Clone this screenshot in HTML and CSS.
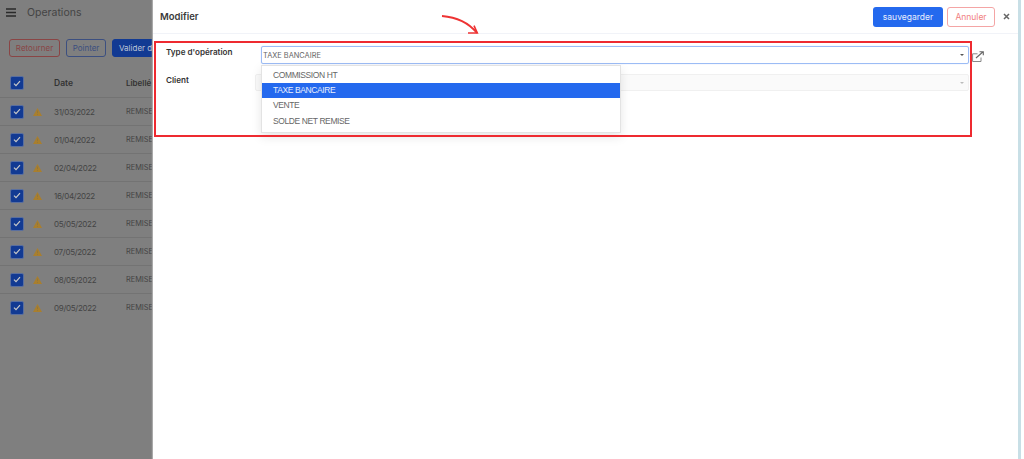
FILE: index.html
```html
<!DOCTYPE html>
<html lang="fr">
<head>
<meta charset="utf-8">
<title>Operations</title>
<link rel="stylesheet" href="styles.css">
</head>
<body>
<div class="screen">
  <section class="page">
    <header class="page-head">
      <svg class="burger" width="10" height="9" viewBox="0 0 10 9"><path d="M0 1h10M0 4.500h10M0 8h10" stroke="#2a2a2a" stroke-width="1.6"/></svg>
      <span class="page-title">Operations</span>
    </header>
    <div class="actions">
      <button class="btn btn-red">Retourner</button>
      <button class="btn btn-blue">Pointer</button>
      <button class="btn btn-solid">Valider d</button>
    </div>
    <div class="row row-head">
      <span class="check"><svg width="8" height="7" viewBox="0 0 8 7"><path d="M1 3.600l2 2 4-4.400" fill="none" stroke="#c9c9c9" stroke-width="1.2"/></svg></span>
      <span class="warn-slot"></span>
      <span class="col-date">Date</span>
      <span class="col-label">Libellé</span>
    </div>
    <div class="row"><span class="check"><svg width="8" height="7" viewBox="0 0 8 7"><path d="M1 3.600l2 2 4-4.400" fill="none" stroke="#c9c9c9" stroke-width="1.2"/></svg></span><span class="warn-slot"><svg width="9" height="8" viewBox="0 0 9 8"><path d="M4.500 0L9 8H0z" fill="#a97f2e"/><path d="M4.500 2.600v2.600M4.500 6v.9" stroke="#8f7540" stroke-width=".9"/></svg></span><span class="col-date">31/03/2022</span><span class="col-label">REMISE</span></div>
    <div class="row"><span class="check"><svg width="8" height="7" viewBox="0 0 8 7"><path d="M1 3.600l2 2 4-4.400" fill="none" stroke="#c9c9c9" stroke-width="1.2"/></svg></span><span class="warn-slot"><svg width="9" height="8" viewBox="0 0 9 8"><path d="M4.500 0L9 8H0z" fill="#a97f2e"/><path d="M4.500 2.600v2.600M4.500 6v.9" stroke="#8f7540" stroke-width=".9"/></svg></span><span class="col-date">01/04/2022</span><span class="col-label">REMISE</span></div>
    <div class="row"><span class="check"><svg width="8" height="7" viewBox="0 0 8 7"><path d="M1 3.600l2 2 4-4.400" fill="none" stroke="#c9c9c9" stroke-width="1.2"/></svg></span><span class="warn-slot"><svg width="9" height="8" viewBox="0 0 9 8"><path d="M4.500 0L9 8H0z" fill="#a97f2e"/><path d="M4.500 2.600v2.600M4.500 6v.9" stroke="#8f7540" stroke-width=".9"/></svg></span><span class="col-date">02/04/2022</span><span class="col-label">REMISE</span></div>
    <div class="row"><span class="check"><svg width="8" height="7" viewBox="0 0 8 7"><path d="M1 3.600l2 2 4-4.400" fill="none" stroke="#c9c9c9" stroke-width="1.2"/></svg></span><span class="warn-slot"><svg width="9" height="8" viewBox="0 0 9 8"><path d="M4.500 0L9 8H0z" fill="#a97f2e"/><path d="M4.500 2.600v2.600M4.500 6v.9" stroke="#8f7540" stroke-width=".9"/></svg></span><span class="col-date">16/04/2022</span><span class="col-label">REMISE</span></div>
    <div class="row"><span class="check"><svg width="8" height="7" viewBox="0 0 8 7"><path d="M1 3.600l2 2 4-4.400" fill="none" stroke="#c9c9c9" stroke-width="1.2"/></svg></span><span class="warn-slot"><svg width="9" height="8" viewBox="0 0 9 8"><path d="M4.500 0L9 8H0z" fill="#a97f2e"/><path d="M4.500 2.600v2.600M4.500 6v.9" stroke="#8f7540" stroke-width=".9"/></svg></span><span class="col-date">05/05/2022</span><span class="col-label">REMISE</span></div>
    <div class="row"><span class="check"><svg width="8" height="7" viewBox="0 0 8 7"><path d="M1 3.600l2 2 4-4.400" fill="none" stroke="#c9c9c9" stroke-width="1.2"/></svg></span><span class="warn-slot"><svg width="9" height="8" viewBox="0 0 9 8"><path d="M4.500 0L9 8H0z" fill="#a97f2e"/><path d="M4.500 2.600v2.600M4.500 6v.9" stroke="#8f7540" stroke-width=".9"/></svg></span><span class="col-date">07/05/2022</span><span class="col-label">REMISE</span></div>
    <div class="row"><span class="check"><svg width="8" height="7" viewBox="0 0 8 7"><path d="M1 3.600l2 2 4-4.400" fill="none" stroke="#c9c9c9" stroke-width="1.2"/></svg></span><span class="warn-slot"><svg width="9" height="8" viewBox="0 0 9 8"><path d="M4.500 0L9 8H0z" fill="#a97f2e"/><path d="M4.500 2.600v2.600M4.500 6v.9" stroke="#8f7540" stroke-width=".9"/></svg></span><span class="col-date">08/05/2022</span><span class="col-label">REMISE</span></div>
    <div class="row"><span class="check"><svg width="8" height="7" viewBox="0 0 8 7"><path d="M1 3.600l2 2 4-4.400" fill="none" stroke="#c9c9c9" stroke-width="1.2"/></svg></span><span class="warn-slot"><svg width="9" height="8" viewBox="0 0 9 8"><path d="M4.500 0L9 8H0z" fill="#a97f2e"/><path d="M4.500 2.600v2.600M4.500 6v.9" stroke="#8f7540" stroke-width=".9"/></svg></span><span class="col-date">09/05/2022</span><span class="col-label">REMISE</span></div>
  </section>

  <section class="drawer">
    <header class="drawer-head">
      <span class="drawer-title">Modifier</span>
      <div class="drawer-actions">
        <button class="btn-save">sauvegarder</button>
        <button class="btn-cancel">Annuler</button>
        <svg class="close" width="7" height="7" viewBox="0 0 7 7"><path d="M1 1l5 5M6 1L1 6" stroke="#666" stroke-width="1.5"/></svg>
      </div>
    </header>
    <div class="form">
      <div class="form-row">
        <label class="form-label">Type d'opération</label>
        <div class="select select-open">
          <span>TAXE BANCAIRE</span>
          <i class="caret"></i>
        </div>
        <svg class="ext" width="12" height="11" viewBox="0 0 12 11"><path d="M9 6.500V10.500H.6V2.800H5.500" fill="none" stroke="#888" stroke-width="1"/><path d="M4 7L10.800 1M7.500 .7h3.800V4.300" fill="none" stroke="#666" stroke-width="1.1"/></svg>
      </div>
      <div class="form-row">
        <label class="form-label">Client</label>
        <div class="select select-off"><i class="caret caret-off"></i></div>
      </div>
    </div>

    <ul class="menu">
      <li>COMMISSION HT</li>
      <li class="active">TAXE BANCAIRE</li>
      <li>VENTE</li>
      <li>SOLDE NET REMISE</li>
    </ul>
    <div class="callout"></div>
    <svg class="arrow" width="38" height="22" viewBox="0 0 38 22"><path d="M1 2C14 3 27 8 36 19" fill="none" stroke="#ee3333" stroke-width="1.800"/><path d="M27 19H36.300L33 11.700" fill="none" stroke="#ee3333" stroke-width="1.600"/></svg>
  </section>
  <div class="edge"></div>
</div>
</body>
</html>
```
FILE: styles.css
```css
* { box-sizing: border-box; }
html, body { margin: 0; height: 100%; }
body { background: #fff; font-family: Inter, "Open Sans", sans-serif; overflow: hidden; }
.screen { display: flex; width: 1024px; height: 459px; padding-right: 3px; background: #fff; }

.page { width: 153px; flex: none; background: #7f7f7f; overflow: hidden; white-space: nowrap; }
.page-head { display: flex; align-items: center; height: 25px; padding-left: 6px; }
.burger { flex: none; }
.page-title { margin-left: 11px; font-size: 10.500px; color: #444; }
.actions { display: flex; gap: 6px; height: 20px; margin: 14px 0 0 9px; width: 200px; }
.btn { height: 18px; padding: 0; border-radius: 3px; font: 8px Inter, sans-serif; background: transparent; border: 1px solid; flex: none; }
.btn-red { width: 51px; color: #8a4545; border-color: #8a4545; }
.btn-blue { width: 40px; color: #3c4f80; border-color: #3c4f80; }
.btn-solid { width: 41px; padding-left: 6px; color: #bfc5d6; background: #123a93; border-color: #123a93; text-align: left; white-space: nowrap; overflow: hidden; border-radius: 3px 0 0 3px; }

.row { display: flex; align-items: center; height: 28px; padding-left: 10px; font-size: 8px; color: #444; border-bottom: 1px solid #737373; }
.row:last-child { border-bottom-color: transparent; }
.row-head { height: 29px; margin-top: 10px; font-weight: 600; color: #333; }
.check { display: flex; align-items: center; justify-content: center; width: 14px; height: 14px; border-radius: 2px; background: #123a93; border: 1px solid #5a6f9f; flex: none; }
.warn-slot { display: flex; width: 10px; margin-left: 9px; flex: none; }
.col-date { margin-left: 11px; width: 72px; flex: none; letter-spacing: -.3px; }
.col-label { font-size: 7.400px; flex: none; }
.row-head .col-date { font-size: 8.500px; letter-spacing: 0; }
.row-head .col-label { font-size: 8px; }

.drawer { position: relative; flex: 1; background: #fff; box-shadow: -1px 0 1px #a9a9a9; }
.drawer-head { display: flex; align-items: center; justify-content: space-between; height: 34px; padding: 0 8px 0 7px; border-bottom: 1px solid #f1f3f8; }
.drawer-title { font-size: 9.500px; font-weight: 600; color: #3a3a3a; }
.drawer-actions { display: flex; align-items: center; }
.btn-save { width: 70px; height: 20px; border: 0; border-radius: 3px; background: #2469ee; color: #e8effd; font: 8.500px Inter, sans-serif; }
.btn-cancel { width: 48px; height: 20px; margin-left: 4px; border: 1px solid #f4a5a5; border-radius: 3px; background: #fff; color: #f17f7f; font: 8.500px Inter, sans-serif; }
.close { margin-left: 8px; }

.form { padding: 12px 0 0 13px; }
.form-row { display: flex; height: 28px; }
.form-label { width: 95px; margin-top: -1px; flex: none; font-size: 8.100px; line-height: 12px; padding-top: 1px; font-weight: 600; color: #333; }
.select { display: flex; align-items: center; justify-content: space-between; width: 708px; height: 18px; padding: 0 4px 0 1px; border-radius: 2px; flex: none; font-size: 7.400px; color: #666; }
.select-open { border: 1px solid #9cbcf5; box-shadow: 0 0 1px #a9c4f7; }
.select-off { width: 714px; height: 17px; margin-left: -6px; border: 1px solid #f0f0f0; background: #fafafa; justify-content: flex-end; }
.caret { width: 0; height: 0; border-left: 2px solid transparent; border-right: 2px solid transparent; border-top: 2px solid #555; }
.caret-off { border-top-color: #bbb; }
.ext { margin: 5px 0 0 3px; flex: none; }

.menu { position: absolute; left: 108px; top: 65px; width: 360px; margin: 0; padding: 1.500px 0 3px; list-style: none; background: #fff; border: 1px solid #e3e3e3; box-shadow: 0 4px 10px rgba(0,0,0,.1); font: 8.500px "Liberation Sans", Arial, sans-serif; letter-spacing: -.4px; color: #666; }
.menu li { height: 15.400px; padding-left: 11px; line-height: 15.400px; }
.menu .active { background: #2469ee; color: #e8effd; }
.callout { position: absolute; left: 1px; top: 41px; width: 818px; height: 96px; border: 2px solid #ee2a30; pointer-events: none; }
.arrow { position: absolute; left: 288px; top: 14px; }
.edge { width: 3px; flex: none; background: #c8dfe6; }
```
